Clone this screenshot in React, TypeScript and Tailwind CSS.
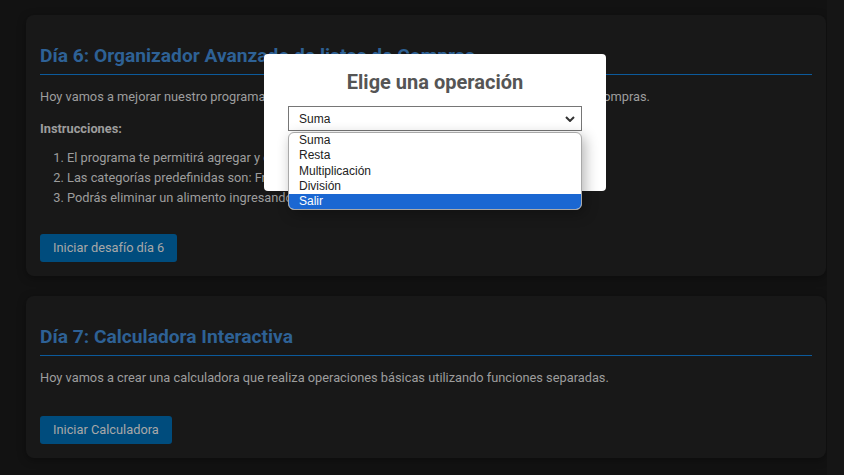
import React from 'react'

function Card({ children }: { children: React.ReactNode }) {
  return (
    <section className="w-[800px] rounded-lg bg-[#181818] px-[14px] pt-[29px] pb-[14px] shadow-[0_2px_8px_rgba(0,0,0,0.35)]">
      {children}
    </section>
  )
}

function Title({ text }: { text: string }) {
  return (
    <h2 className="border-b border-[#0c5a9b] pb-[6px] text-[19.2px] font-bold leading-[24px] text-[#2e6195]">
      {text}
    </h2>
  )
}

function StartButton({ label, className }: { label: string; className: string }) {
  return (
    <button
      type="button"
      className={`${className} block h-[28px] rounded-[3px] bg-[#004c7d] px-[13px] text-[12.8px] text-[#a8a8a8]`}
    >
      {label}
    </button>
  )
}

const operations = ['Suma', 'Resta', 'Multiplicación', 'División', 'Salir']

export default function App() {
  return (
    <div className="relative flex h-[475px] overflow-hidden bg-[#121212] font-['Roboto',sans-serif]">
      <main className="flex flex-1 flex-col gap-5 pt-[15px] pl-[26px]">
        <Card>
          <Title text="Día 6: Organizador Avanzado de listas de Compras" />
          <p className="mt-[12px] text-[12.8px] leading-[20px] text-[#9d9d9d]">
            Hoy vamos a mejorar nuestro programa organizando los alimentos por categorías en tus listas de compras.
          </p>
          <p className="mt-[12px] text-[12.8px] font-bold leading-[20px] text-[#9d9d9d]">Instrucciones:</p>
          <ol className="mt-[9px] list-decimal pl-[27px] text-[12.8px] leading-[20px] text-[#9d9d9d]">
            <li>El programa te permitirá agregar y clasificar alimentos en categorías.</li>
            <li>Las categorías predefinidas son: Frutas, Verduras, Lácteos, Carnes y Otros.</li>
            <li>Podrás eliminar un alimento ingresando su nombre y categoría.</li>
          </ol>
          <StartButton label="Iniciar desafío día 6" className="mt-[26px]" />
        </Card>

        <Card>
          <Title text="Día 7: Calculadora Interactiva" />
          <p className="mt-[12px] text-[12.8px] leading-[20px] text-[#9d9d9d]">
            Hoy vamos a crear una calculadora que realiza operaciones básicas utilizando funciones separadas.
          </p>
          <StartButton label="Iniciar Calculadora" className="mt-[28px]" />
        </Card>
      </main>
      <div className="w-[17px] bg-[#151515]" />

      {/* modal */}
      <div className="absolute top-[54px] left-[264px] h-[137px] w-[342px] rounded-[4px] bg-white px-6 pt-4">
        <h3 className="text-center text-[20px] font-bold leading-[24px] text-[#555555]">Elige una operación</h3>
        <div className="mt-3 flex h-[25px] items-center justify-between border border-[#767676] bg-white pr-[6px] pl-[10px] font-['Liberation_Sans',sans-serif] text-[12px] text-[#222]">
          <span>Suma</span>
          <svg width="10" height="6" viewBox="0 0 10 6" fill="none">
            <path d="M1 1l4 4 4-4" stroke="#333" strokeWidth="2" />
          </svg>
        </div>
      </div>

      {/* open select list */}
      <ul className="absolute top-[132px] left-[288px] w-[294px] overflow-hidden rounded-[6px] border border-[#a9a9a9] bg-white font-['Liberation_Sans',sans-serif] text-[12px] leading-[15.3px] text-[#222] shadow-[3px_4px_14px_rgba(0,0,0,0.3)]">
        {operations.map((op) => (
          <li key={op} className={op === 'Salir' ? 'bg-[#1a67d2] pl-[10px] text-white' : 'pl-[10px]'}>
            {op}
          </li>
        ))}
      </ul>
    </div>
  )
}
